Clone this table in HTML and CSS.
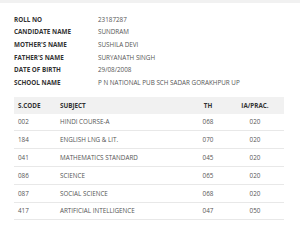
FILE: index.html
```html
<!DOCTYPE html>
<html>
<head>
<meta charset="utf-8">
<link rel="stylesheet" href="styles.css">
</head>
<body>
<div class="band"></div>
<div class="page">
  <div class="info">
    <div class="label">ROLL NO</div><div class="value">23187287</div>
    <div class="label">CANDIDATE NAME</div><div class="value">SUNDRAM</div>
    <div class="label">MOTHER'S NAME</div><div class="value">SUSHILA DEVI</div>
    <div class="label">FATHER'S NAME</div><div class="value">SURYANATH SINGH</div>
    <div class="label">DATE OF BIRTH</div><div class="value">29/08/2008</div>
    <div class="label">SCHOOL NAME</div><div class="value">P N NATIONAL PUB SCH SADAR GORAKHPUR UP</div>
  </div>
  <div class="table">
    <div class="row head">
      <div class="c code">S.CODE</div><div class="c subj">SUBJECT</div><div class="c num">TH</div><div class="c num">IA/PRAC.</div>
    </div>
    <div class="row">
      <div class="c code">002</div><div class="c subj">HINDI COURSE-A</div><div class="c num">068</div><div class="c num">020</div>
    </div>
    <div class="row">
      <div class="c code">184</div><div class="c subj">ENGLISH LNG &amp; LIT.</div><div class="c num">070</div><div class="c num">020</div>
    </div>
    <div class="row">
      <div class="c code">041</div><div class="c subj">MATHEMATICS STANDARD</div><div class="c num">045</div><div class="c num">020</div>
    </div>
    <div class="row">
      <div class="c code">086</div><div class="c subj">SCIENCE</div><div class="c num">065</div><div class="c num">020</div>
    </div>
    <div class="row">
      <div class="c code">087</div><div class="c subj">SOCIAL SCIENCE</div><div class="c num">068</div><div class="c num">020</div>
    </div>
    <div class="row">
      <div class="c code">417</div><div class="c subj">ARTIFICIAL INTELLIGENCE</div><div class="c num">047</div><div class="c num">050</div>
    </div>
  </div>
</div>
</body>
</html>
```
FILE: styles.css
```css
html, body {
  margin: 0;
  padding: 0;
  background: #ffffff;
  font-family: "Open Sans", "Noto Sans", sans-serif;
  font-size: 6.3px;
  color: #555555;
}
.band {
  height: 3px;
  background: #f1f1f1;
}
.page {
  padding: 10px 16px 0 14px;
}
.info {
  display: grid;
  grid-template-columns: 84px 1fr;
  grid-auto-rows: 12.6px;
  align-items: center;
}
.label {
  font-weight: 700;
  color: #333333;
}
.value {
  color: #555555;
}
.table {
  margin-top: 8.5px;
}
.row {
  display: grid;
  grid-template-columns: 46px 125px 46px 48px;
  height: 17.8px;
  align-items: center;
  border-bottom: 1px solid #e8e8e8;
  box-sizing: border-box;
}
.row.head {
  height: 16.5px;
  background: #f1f1f1;
  border-bottom: none;
  font-weight: 700;
  color: #333333;
}
.c.code {
  padding-left: 4px;
}
.c.num {
  text-align: center;
}
```
